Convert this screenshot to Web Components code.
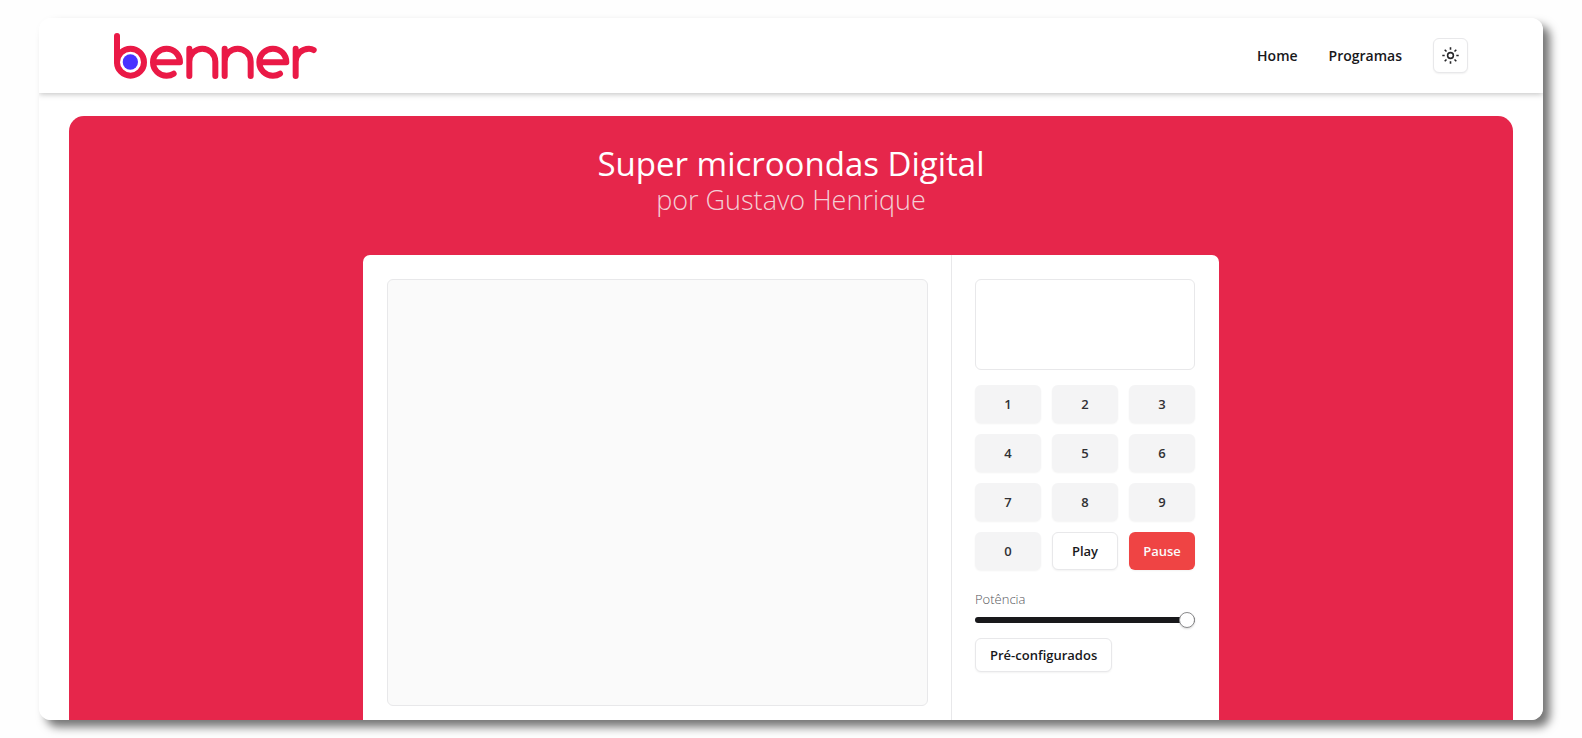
<!DOCTYPE html>
<html lang="pt-BR">
<head>
<meta charset="utf-8">
<meta name="viewport" content="width=device-width, initial-scale=1">
<title>Super microondas Digital</title>
<style>
  html, body { margin: 0; height: 100%; background: #fefefe; }
  body {
    box-sizing: border-box;
    padding: 18px 39px;
    overflow: hidden;
    font-family: "Open Sans", "Noto Sans", sans-serif;
    font-size: 14px;
    line-height: 20px;
    color: #18181b;
    --brand: #e6264b;
    --line: #e8e8ea;
    --muted: #f4f4f5;
  }
</style>
</head>
<body>
<app-window>
  <site-header slot="header">
    <nav-link href="#home">Home</nav-link>
    <nav-link href="#programas">Programas</nav-link>
  </site-header>
  <hero-panel>
    <span slot="title">Super microondas Digital</span>
    <span slot="subtitle">por Gustavo Henrique</span>
    <microwave-oven>
      <key-pad></key-pad>
      <power-slider>Potência</power-slider>
      <ui-button variant="outline">Pré-configurados</ui-button>
    </microwave-oven>
  </hero-panel>
</app-window>

<script>
  class Base extends HTMLElement {
    constructor() {
      super();
      this.attachShadow({ mode: "open" }).innerHTML = this.constructor.markup;
    }
  }

  customElements.define("app-window", class extends Base {
    static markup = `
      <style>
        :host { display: block; height: 100%; border-radius: 12px; box-shadow: 7px 7px 10px rgba(0,0,0,.54); }
        .view { height: 100%; overflow: hidden; border-radius: inherit; background: #fff; }
        main { padding: 23px 30px; }
      </style>
      <div class="view"><slot name="header"></slot><main><slot></slot></main></div>`;
  });

  customElements.define("brand-logo", class extends Base {
    static markup = `
      <style>:host { display: block; } svg { display: block; }</style>
      <svg width="203" height="46" viewBox="283 97 609 138" role="img" aria-label="benner">
        <g fill="none" stroke="#ea1946" stroke-width="18" stroke-linecap="round" stroke-linejoin="round">
          <path d="M292 106V184"/><circle cx="332.500" cy="184.500" r="40.500"/>
          <path d="M400 185H481A40.500 40.500 0 1 0 441 225Q453 225 462 219"/>
          <path d="M509 144V226M509 183A39 39 0 0 1 587 183V226"/>
          <path d="M615 144V226M615 183A39 39 0 0 1 693 183V226"/>
          <path d="M719 185H800A40.500 40.500 0 1 0 760 225Q772 225 781 219"/>
          <path d="M828 144V226M828 183A40 40 0 0 1 868 144Q876 144 882 148"/>
        </g>
        <circle cx="332" cy="184" r="23" fill="#4932ff"/>
      </svg>`;
  });

  customElements.define("nav-link", class extends Base {
    static markup = `
      <style>
        :host { display: block; }
        a { color: inherit; text-decoration: none; font-weight: 600; font-size: 14px; line-height: 20px; }
      </style>
      <a><slot></slot></a>`;
    connectedCallback() {
      this.shadowRoot.querySelector("a").href = this.getAttribute("href");
    }
  });

  customElements.define("theme-toggle", class extends Base {
    static markup = `
      <style>
        :host { display: block; }
        button { display: grid; place-items: center; width: 35px; height: 35px; padding: 0; border: 1px solid var(--line); border-radius: 6px; background: #fff; color: #27272a; box-shadow: 0 1px 2px rgba(0,0,0,.06); }
      </style>
      <button type="button" aria-label="Alternar tema">
        <svg width="17" height="17" viewBox="0 0 17 17" fill="none" stroke="currentColor" stroke-width="1.600">
          <circle cx="8.500" cy="8.500" r="2.900"/>
          <path d="M8.500 .3V2.700M8.500 14.300V16.700M.3 8.500H2.700M14.300 8.500H16.700M2.700 2.700L4.500 4.500M12.500 12.500L14.300 14.300M2.700 14.300L4.500 12.500M12.500 4.500L14.300 2.700"/>
        </svg>
      </button>`;
  });

  customElements.define("site-header", class extends Base {
    static markup = `
      <style>
        :host { display: block; box-shadow: 0 1px 6px rgba(0,0,0,.26); }
        header { display: flex; align-items: center; justify-content: space-between; height: 75px; padding: 0 75px; }
        nav { display: flex; align-items: center; gap: 31px; }
      </style>
      <header><brand-logo></brand-logo><nav><slot></slot><theme-toggle></theme-toggle></nav></header>`;
  });

  customElements.define("hero-panel", class extends Base {
    static markup = `
      <style>
        :host { display: block; padding: 30px; border-radius: 15px; background: var(--brand); }
        h1, p { margin: 0; text-align: center; color: #fff; }
        h1 { font-size: 33px; font-weight: 400; line-height: 36px; }
        p { font-size: 27px; font-weight: 300; line-height: 36px; color: #f3cfd6; margin-bottom: 37px; }
        ::slotted(span) { display: block; }
      </style>
      <h1><slot name="title"></slot></h1>
      <p><slot name="subtitle"></slot></p>
      <slot></slot>`;
  });

  customElements.define("microwave-oven", class extends Base {
    static markup = `
      <style>
        :host { display: grid; grid-template-columns: 1fr 267px; box-sizing: border-box; max-width: 856px; margin: 0 auto; border-radius: 7px; background: #fff; }
        .door { padding: 24px 23px 24px 24px; border-right: 1px solid var(--line); }
        .glass { box-sizing: border-box; height: 427px; border: 1px solid var(--line); border-radius: 6px; background: #fafafa; }
        .controls { display: flex; flex-direction: column; align-items: stretch; gap: 15px; padding: 24px 24px 24px 23px; }
        output { display: block; box-sizing: border-box; height: 91px; border: 1px solid var(--line); border-radius: 6px; }
        ::slotted(ui-button) { align-self: flex-start; }
      </style>
      <section class="door"><div class="glass"></div></section>
      <section class="controls"><output aria-label="Visor"></output><slot></slot></section>`;
  });

  customElements.define("ui-button", class extends Base {
    static markup = `
      <style>
        :host { display: block; }
        button { box-sizing: border-box; width: 100%; height: 34px; padding: 0 14px; border: 1px solid transparent; border-radius: 6px; font: 600 13px/20px "Open Sans", "Noto Sans", sans-serif; color: #18181b; background: var(--muted); box-shadow: 0 1px 2px rgba(0,0,0,.05); }
        :host([size=key]) button { height: 38px; padding: 0; color: #303034; }
        :host([size=key][variant=outline]) button { color: #18181b; }
        :host([variant=outline]) button { background: #fff; border-color: var(--line); }
        :host([size=key][variant=danger]) button { background: #ef4444; color: #fafafa; }
      </style>
      <button type="button"><slot></slot></button>`;
  });

  customElements.define("key-pad", class extends Base {
    static markup = `
      <style>
        :host { display: grid; grid-template-columns: repeat(3, 1fr); gap: 11px; }
      </style>
      ${[1, 2, 3, 4, 5, 6, 7, 8, 9, 0].map(n => `<ui-button size="key">${n}</ui-button>`).join("")}
      <ui-button size="key" variant="outline">Play</ui-button>
      <ui-button size="key" variant="danger">Pause</ui-button>`;
  });

  customElements.define("power-slider", class extends Base {
    static markup = `
      <style>
        :host { display: block; padding-top: 4px; }
        label { display: block; font-size: 13px; line-height: 20px; font-weight: 300; color: #55555b; }
        input { -webkit-appearance: none; appearance: none; display: block; width: 100%; height: 16px; margin: 3px 0 -5px; background: transparent; }
        input::-webkit-slider-runnable-track { height: 6px; border-radius: 3px; background: #18181b; }
        input::-webkit-slider-thumb { -webkit-appearance: none; box-sizing: border-box; width: 16px; height: 16px; margin-top: -5px; border: 1px solid #8b8b8d; border-radius: 50%; background: #fff; box-shadow: 0 1px 2px rgba(0,0,0,.15); }
      </style>
      <label for="power"><slot></slot></label>
      <input id="power" type="range" min="1" max="10" value="10">`;
  });
</script>
</body>
</html>
